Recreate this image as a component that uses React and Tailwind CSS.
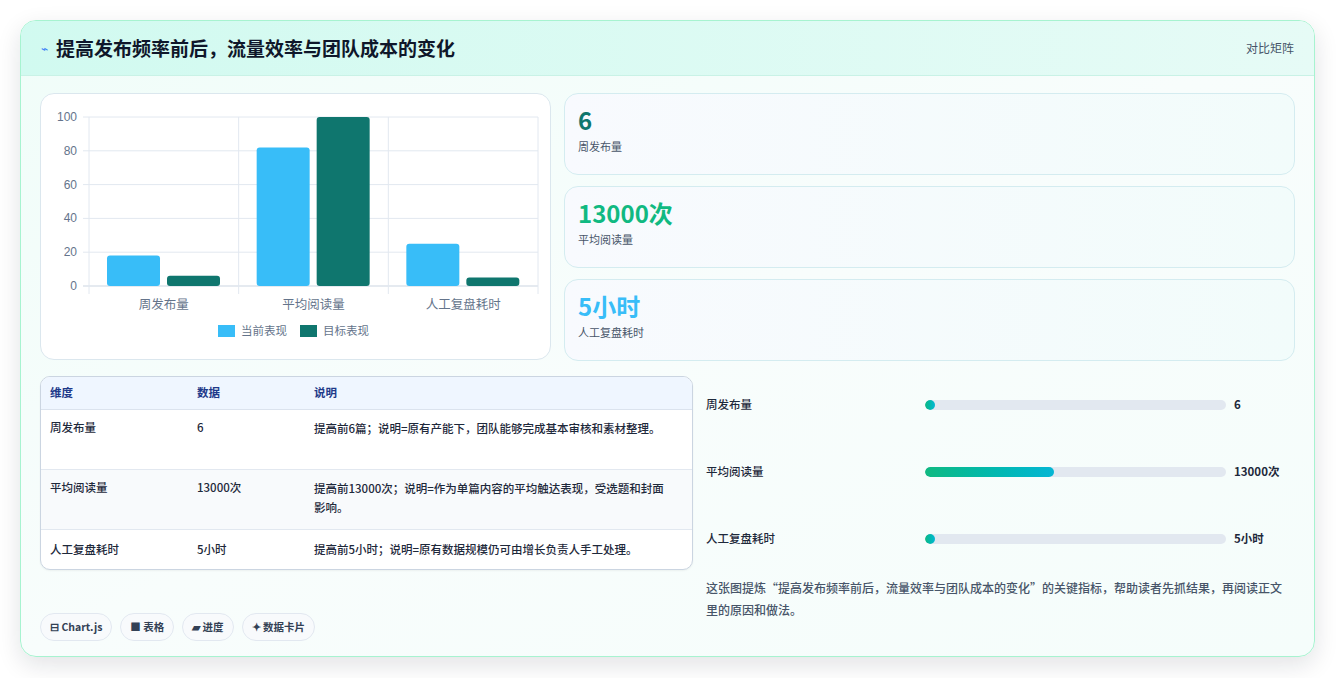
import React from "react";

const font = { fontFamily: '"Noto Sans CJK SC", "Noto Sans", sans-serif' };

function Chart() {
  const x0 = 48, x1 = 497, yTop = 23, yBot = 192;
  const s = (yBot - yTop) / 100;
  const groups = [
    ["周发布量", 18, 6],
    ["平均阅读量", 82, 100],
    ["人工复盘耗时", 25, 5],
  ];
  const gw = (x1 - x0) / 3;
  return (
    <svg width="509" height="266" viewBox="0 0 509 266">
      {[0, 20, 40, 60, 80, 100].map((v) => (
        <g key={v}>
          <line x1={x0 - 6} x2={x1} y1={yBot - v * s} y2={yBot - v * s} stroke={v === 0 ? "#cbd5e1" : "#e2e8f0"} />
          <text x={x0 - 12} y={yBot - v * s + 4} textAnchor="end" fontSize="12" fill="#64748b" fontFamily="Liberation Sans, sans-serif">{v}</text>
        </g>
      ))}
      {[0, 1, 2, 3].map((i) => (
        <line key={i} x1={x0 + i * gw} x2={x0 + i * gw} y1={yTop} y2={yBot + 8} stroke="#e2e8f0" />
      ))}
      {groups.map(([n, a, b], i) => {
        const gx = x0 + i * gw;
        return (
          <g key={n}>
            <rect x={gx + 18} y={yBot - a * s} width={53} height={a * s} rx="3" fill="#38bdf8" />
            <rect x={gx + 78} y={yBot - b * s} width={53} height={b * s} rx="3" fill="#0f766e" />
            <text x={gx + gw / 2} y={yBot + 23} textAnchor="middle" fontSize="12.5" fill="#64748b" style={font}>{n}</text>
          </g>
        );
      })}
      <rect x="177" y="231" width="17" height="12" fill="#38bdf8" />
      <text x="200" y="241" fontSize="11.5" fill="#64748b" style={font}>当前表现</text>
      <rect x="259" y="231" width="17" height="12" fill="#0f766e" />
      <text x="282" y="241" fontSize="11.5" fill="#64748b" style={font}>目标表现</text>
    </svg>
  );
}

const stats = [
  ["6", "周发布量", "text-[#0f766e]"],
  ["13000次", "平均阅读量", "text-[#10b981]"],
  ["5小时", "人工复盘耗时", "text-[#38bdf8]"],
];

const rows = [
  ["周发布量", "6", "提高前6篇；说明=原有产能下，团队能够完成基本审核和素材整理。", ""],
  ["平均阅读量", "13000次", "提高前13000次；说明=作为单篇内容的平均触达表现，受选题和封面影响。", "bg-[#f8fafc]"],
  ["人工复盘耗时", "5小时", "提高前5小时；说明=原有数据规模仍可由增长负责人手工处理。", ""],
];

const bars = [
  ["周发布量", 3, "6"],
  ["平均阅读量", 43, "13000次"],
  ["人工复盘耗时", 3, "5小时"],
];

export default function App() {
  return (
    <div style={font} className="w-[1336px] h-[678px] bg-white pt-[20px] pl-[20px]">
      <div className="w-[1295px] h-[637px] rounded-[16px] border border-[#a7f3d0] bg-gradient-to-br from-[#f0fdf9] via-[#f8fdfc] to-[#f5fdfb] shadow-[0_8px_24px_rgba(15,23,42,0.12)] overflow-hidden flex flex-col">
        <div className="h-[55px] shrink-0 flex items-center justify-between px-[20px] bg-gradient-to-r from-[#d1faf0] to-[#e6fbf6] border-b border-[#c9f2e6]">
          <div className="flex items-center gap-[8px]">
            <span className="text-[#3b82f6] text-[12px]">⌁</span>
            <span className="text-[19px] font-bold text-[#0f172a]">提高发布频率前后，流量效率与团队成本的变化</span>
          </div>
          <span className="text-[12px] text-[#475569]">对比矩阵</span>
        </div>
        <div className="px-[19px] pt-[17px] flex flex-col">
          <div className="flex gap-[13px]">
            <div className="w-[511px] h-[267px] rounded-[14px] border border-[#dbe7ee] bg-white">
              <Chart />
            </div>
            <div className="flex-1 flex flex-col gap-[11px]">
              {stats.map(([v, l, c]) => (
                <div key={l} className="h-[82px] rounded-[14px] border border-[#d4ecf0] bg-gradient-to-r from-[#f8fafe] to-[#f2fcfb] px-[13px] pt-[10px]">
                  <div className={`text-[24px] font-bold leading-[32px] ${c}`}>{v}</div>
                  <div className="text-[11px] text-[#475569] mt-[2px]">{l}</div>
                </div>
              ))}
            </div>
          </div>
          <div className="flex gap-[13px] mt-[15px]">
            <div className="w-[653px] flex flex-col">
              <div className="rounded-[10px] border border-[#cbd5e1] overflow-hidden bg-white shadow-[0_1px_2px_rgba(0,0,0,0.05)]">
                <div className="flex h-[33px] items-center bg-[#eff6ff] border-b border-[#dbe3ee] text-[11.5px] font-bold text-[#1e3a8a]">
                  <div className="w-[156px] pl-[9px]">维度</div>
                  <div className="w-[117px]">数据</div>
                  <div className="flex-1">说明</div>
                </div>
                {rows.map(([a, b, c, bg], i) => (
                  <div key={a} className={`flex text-[11.5px] text-[#1e293b] font-medium ${bg} ${i < 2 ? "border-b border-[#e2e8f0] h-[60px] pt-[9px]" : "h-[39px] items-center"}`}>
                    <div className="w-[156px] pl-[9px]">{a}</div>
                    <div className="w-[117px]">{b}</div>
                    <div className="flex-1 pr-[20px] leading-[19px]">{c}</div>
                  </div>
                ))}
              </div>
              <div className="flex gap-[8px] mt-[43px]">
                {["⊟ Chart.js", "■ 表格", "▰ 进度", "✦ 数据卡片"].map((t) => (
                  <span key={t} className="h-[28px] px-[9px] flex items-center rounded-full border border-[#e2e8f0] bg-[#f8fafc] text-[10.5px] font-bold text-[#334155]">{t}</span>
                ))}
              </div>
            </div>
            <div className="flex-1 flex flex-col">
              <div className="flex flex-col gap-[50px] mt-[20px]">
                {bars.map(([l, p, v]) => (
                  <div key={l} className="flex items-center h-[17px]">
                    <div className="w-[219px] text-[11.5px] font-medium text-[#1e293b]">{l}</div>
                    <div className="w-[301px] h-[10px] rounded-full bg-[#e2e8f0] overflow-hidden">
                      <div className="h-full rounded-full bg-gradient-to-r from-[#10b981] to-[#06b6d4]" style={{ width: p === 3 ? "10px" : `${p}%` }} />
                    </div>
                    <div className="pl-[8px] text-[11.5px] font-bold text-[#1e293b]">{v}</div>
                  </div>
                ))}
              </div>
              <p className="mt-[30px] text-[12px] leading-[22px] text-[#475569] font-medium pr-[4px]">
                这张图提炼“提高发布频率前后，流量效率与团队成本的变化”的关键指标，帮助读者先抓结果，再阅读正文里的原因和做法。
              </p>
            </div>
          </div>
        </div>
      </div>
    </div>
  );
}
